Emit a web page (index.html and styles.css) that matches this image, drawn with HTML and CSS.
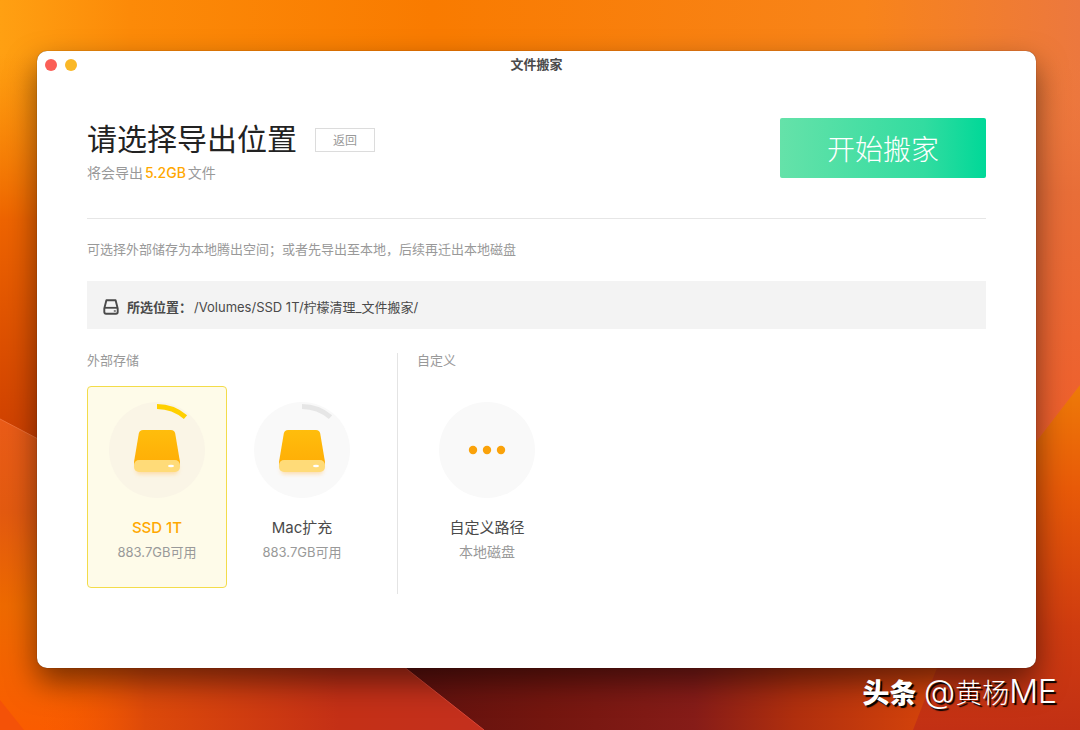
FILE: index.html
```
<!DOCTYPE html>
<html lang="zh-CN">
	<head>
		<meta charset="UTF-8">
		<title>文件搬家</title>
		<link rel="stylesheet" href="styles.css">
	</head>
	<body>
		<!-- 桌面壁纸 -->
		<svg class="wallpaper" viewBox="0 0 1080 730" preserveAspectRatio="none" aria-hidden="true">
			<defs>
				<linearGradient id="top" x1="0" y1="0" x2="1" y2="0">
					<stop offset="0" stop-color="#ffa012"/>
					<stop offset=".12" stop-color="#fc8a08"/>
					<stop offset=".4" stop-color="#f97b00"/>
					<stop offset=".8" stop-color="#f8841a"/>
					<stop offset="1" stop-color="#ec783e"/>
				</linearGradient>
				<linearGradient id="left" x1="0" y1="0" x2="0" y2="1">
					<stop offset=".12" stop-color="#f57800" stop-opacity="0"/>
					<stop offset=".5" stop-color="#ee6400"/>
					<stop offset="1" stop-color="#cf4000"/>
				</linearGradient>
				<linearGradient id="right" x1="0" y1="0" x2="0" y2="1">
					<stop offset=".11" stop-color="#ee7840" stop-opacity="0"/>
					<stop offset=".4" stop-color="#e86e38"/>
					<stop offset="1" stop-color="#f05c2a"/>
				</linearGradient>
				<linearGradient id="leftLow" x1="0" y1="0" x2="0" y2="1">
					<stop offset="0" stop-color="#ea5c18"/>
					<stop offset=".3" stop-color="#e35a10"/>
					<stop offset=".6" stop-color="#ee6a00"/>
					<stop offset="1" stop-color="#fa5c00"/>
				</linearGradient>
				<linearGradient id="bottomLeft" x1="0" y1="0" x2="1" y2="0">
					<stop offset=".08" stop-color="#f85a00" stop-opacity="0"/>
					<stop offset=".3" stop-color="#dd4a0a"/>
					<stop offset=".7" stop-color="#c43016"/>
					<stop offset="1" stop-color="#c4301e"/>
				</linearGradient>
				<linearGradient id="dark" x1="0" y1="0" x2="1" y2="0">
					<stop offset="0" stop-color="#5c100e"/>
					<stop offset=".3" stop-color="#74160f"/>
					<stop offset=".55" stop-color="#861c18"/>
					<stop offset=".72" stop-color="#b02f0e"/>
					<stop offset="1" stop-color="#dd480a"/>
				</linearGradient>
				<linearGradient id="rightLow" x1="0" y1="0" x2="0" y2="1">
					<stop offset="0" stop-color="#ee7a08"/>
					<stop offset=".3" stop-color="#e85a08"/>
					<stop offset=".7" stop-color="#cf3c10"/>
					<stop offset="1" stop-color="#c23014"/>
				</linearGradient>
			</defs>
			<rect width="1080" height="730" fill="url(#top)"/>
			<rect width="300" height="440" fill="url(#left)"/>
			<rect x="900" width="180" height="480" fill="url(#right)"/>
			<path d="M0 419L40 440L500 730H0Z" fill="url(#leftLow)"/>
			<path d="M0 640L370 640L484 730H0Z" fill="url(#bottomLeft)"/>
			<path d="M0 700L24 730H0Z" fill="#f45208"/>
			<path d="M370 640H960L915 730H484Z" fill="url(#dark)"/>
			<path d="M1080 385L1036 442L940 660L913 730H1080Z" fill="url(#rightLow)"/>
			<path d="M0 419L40 440" stroke="#f07238" stroke-width="1"/>
			<path d="M370 640L484 730" stroke="#d84438" stroke-width="1"/>
		</svg>

		<main class="window">
			<div class="titlebar">
				<div class="lights">
					<button class="light close" type="button" aria-label="关闭"></button>
					<button class="light mini" type="button" aria-label="最小化"></button>
				</div>
				<div class="title">文件搬家</div>
			</div>

			<div class="content">
				<header class="head">
					<div>
						<div class="head-line">
							<h1>请选择导出位置</h1>
							<button class="back" type="button">返回</button>
						</div>
						<p class="total">将会导出<b>5.2GB</b>文件</p>
					</div>
					<button class="start" type="button">开始搬家</button>
				</header>

				<p class="hint">可选择外部储存为本地腾出空间；或者先导出至本地，后续再迁出本地磁盘</p>

				<!-- 当前路径 -->
				<div class="path">
					<svg class="path-icon" width="16" height="16" viewBox="0 0 16 16" fill="none" stroke="#4a4a4a" aria-hidden="true">
						<path d="M3.4 1.2H12.6L14.7 9.4V13Q14.7 14.7 13 14.7H3Q1.300 14.7 1.300 13V9.4Z" stroke-width="1.900" stroke-linejoin="round"/>
						<path d="M1.6 8.8H14.4" stroke-width="1.800"/>
						<path d="M10.8 12H12.8" stroke-width="1.300"/>
					</svg>
					<strong>所选位置：</strong>
					<span>/Volumes/SSD 1T/柠檬清理_文件搬家/</span>
				</div>

				<!-- 导出位置 -->
				<div class="places">
					<section class="group external">
						<h2>外部存储</h2>
						<div class="cards">
							<label class="card">
								<input type="radio" name="place" checked>
								<svg class="disk" width="96" height="96" viewBox="0 0 96 96" aria-hidden="true">
									<defs>
										<linearGradient id="diskTop" x1="0" y1="0" x2="0" y2="1">
											<stop offset="0" stop-color="#ffbd0c"/>
											<stop offset="1" stop-color="#ffad06"/>
										</linearGradient>
										<filter id="glow" x="-30%" y="-80%" width="160%" height="300%">
											<feGaussianBlur stdDeviation="2"/>
										</filter>
									</defs>
									<circle class="disk-bg" cx="48" cy="48" r="48"/>
									<path class="disk-used" d="M48 4.500A43.500 43.500 0 0 1 76.500 15.200" fill="none" stroke-width="5"/>
									<rect x="27" y="62" width="42" height="10" rx="4" fill="#ffc97a" opacity=".6" filter="url(#glow)"/>
									<path d="M34 28H62Q65.500 28 66.200 31.500L71 60V64H25V60L29.800 31.500Q30.500 28 34 28Z" fill="url(#diskTop)"/>
									<rect x="25" y="58" width="46" height="12" rx="5" fill="#ffdb78"/>
									<ellipse cx="62" cy="64" rx="3" ry="1.300" fill="#fff"/>
								</svg>
								<span class="name">SSD 1T</span>
								<span class="free">883.7GB可用</span>
							</label>
							<label class="card">
								<input type="radio" name="place">
								<svg class="disk" width="96" height="96" viewBox="0 0 96 96" aria-hidden="true">
									<circle class="disk-bg" cx="48" cy="48" r="48"/>
									<path class="disk-used" d="M48 4.500A43.500 43.500 0 0 1 76.500 15.200" fill="none" stroke-width="5"/>
									<rect x="27" y="62" width="42" height="10" rx="4" fill="#ffc97a" opacity=".6" filter="url(#glow)"/>
									<path d="M34 28H62Q65.500 28 66.200 31.500L71 60V64H25V60L29.800 31.500Q30.500 28 34 28Z" fill="url(#diskTop)"/>
									<rect x="25" y="58" width="46" height="12" rx="5" fill="#ffdb78"/>
									<ellipse cx="62" cy="64" rx="3" ry="1.300" fill="#fff"/>
								</svg>
								<span class="name">Mac扩充</span>
								<span class="free">883.7GB可用</span>
							</label>
						</div>
					</section>

					<section class="group custom">
						<h2>自定义</h2>
						<div class="cards">
							<label class="card">
								<input type="radio" name="place">
								<svg class="disk" width="96" height="96" viewBox="0 0 96 96" aria-hidden="true">
									<circle class="disk-bg" cx="48" cy="48" r="48"/>
									<g fill="#faa20a">
										<circle cx="34" cy="48" r="4.200"/>
										<circle cx="48" cy="48" r="4.200"/>
										<circle cx="62" cy="48" r="4.200"/>
									</g>
								</svg>
								<span class="name">自定义路径</span>
								<span class="free local">本地磁盘</span>
							</label>
						</div>
					</section>
				</div>
			</div>
		</main>

		<div class="watermark"><b>头条</b> <span>@</span>黄杨<span>ME</span></div>
	</body>
</html>
```
FILE: styles.css
```
*{
	margin: 0;
	padding: 0;
	box-sizing: border-box;
}
body{
	min-height: 100vh;
	display: flex;
	position: relative;
	padding: 51px 44px 62px 37px;
	background-color: #e85a08;
	font-family: Inter, "Noto Sans CJK SC", sans-serif;
	font-size: 13px;
	line-height: 20px;
	color: #4a4a4a;
}
button{
	font-family: inherit;
	border: none;
	cursor: pointer;
}
.wallpaper{
	position: absolute;
	top: 0;
	left: 0;
	width: 100%;
	height: 100%;
}

/* 窗口 */
.window{
	position: relative;
	flex: 1;
	background-color: #fff;
	border-radius: 10px;
	box-shadow: 0 0 1px rgba(0,0,0,.6), 0 14px 30px rgba(0,0,0,.5);
}
.titlebar{
	display: grid;
	grid-template-columns: 1fr auto 1fr;
	align-items: center;
	height: 28px;
	padding: 0 8px;
}
.lights{
	display: flex;
	gap: 8px;
}
.light{
	width: 12px;
	height: 12px;
	border-radius: 50%;
}
.close{
	background-color: #fb5f57;
}
.mini{
	background-color: #fab827;
}
.title{
	padding-bottom: 2px;
	font-weight: bold;
}
.content{
	padding: 39px 50px 0;
}

/* 头部 */
.head{
	display: flex;
	justify-content: space-between;
	align-items: flex-start;
	padding-bottom: 35px;
	border-bottom: 1px solid #e6e6e6;
}
.head-line{
	display: flex;
	align-items: center;
	gap: 18px;
}
h1{
	font-size: 30px;
	line-height: 43px;
	font-weight: normal;
	color: #222;
}
.back{
	width: 60px;
	height: 24px;
	border: 1px solid #dcdcdc;
	background-color: #fff;
	font-size: 12px;
	color: #999;
}
.total{
	margin-top: 2px;
	font-size: 14px;
	color: #999;
}
.total b{
	margin: 0 2px;
	font-weight: 500;
	color: #ffa800;
}
.start{
	width: 206px;
	height: 60px;
	border-radius: 2px;
	background-image: linear-gradient(to right, #65e2a9, #32dca0 70%, #00d898);
	font-size: 28px;
	font-weight: 300;
	color: #fff;
}
.hint{
	margin: 20px 0 22px;
	color: #999;
}

.path{
	display: flex;
	align-items: center;
	height: 48px;
	padding: 3px 16px 0;
	background-color: #f3f3f3;
}
.path strong{
	margin: 0 2px 0 8px;
}

/* 位置卡片 */
.places{
	display: flex;
	margin-top: 24px;
}
.group{
	padding-bottom: 6px;
}
.external{
	padding-right: 25px;
	border-right: 1px solid #e4e4e4;
}
.custom{
	padding-left: 19px;
}
h2{
	font-size: 13px;
	line-height: 14px;
	font-weight: normal;
	color: #999;
}
.cards{
	display: flex;
	gap: 5px;
	margin-top: 19px;
}
.card{
	position: relative;
	display: flex;
	flex-direction: column;
	align-items: center;
	width: 140px;
	padding: 15px 0 25px;
	border: 1px solid transparent;
	border-radius: 4px;
	cursor: pointer;
}
.card input{
	position: absolute;
	opacity: 0;
}
.disk-bg{
	fill: #f9f9f9;
}
.disk-used{
	stroke: #e6e6e6;
}
.name{
	margin-top: 20px;
	font-size: 15px;
}
.free{
	margin-top: 4px;
	color: #999;
}
.local{
	font-size: 14px;
}
.card:has(:checked){
	border-color: #f3dc4a;
	background-color: #fefbe9;
}
.card:has(:checked) .disk-bg{
	fill: #faf5e6;
}
.card:has(:checked) .disk-used{
	stroke: #ffd000;
}
.card:has(:checked) .name{
	font-weight: 500;
	color: #ffa800;
}

.watermark{
	position: absolute;
	right: 23px;
	bottom: 16px;
	font-size: 27px;
	line-height: 40px;
	font-weight: 300;
	color: #fff;
	text-shadow: 2px 2px 1px #000;
}
.watermark b{
	font-weight: 900;
}
.watermark span{
	font-size: 32px;
}
```
